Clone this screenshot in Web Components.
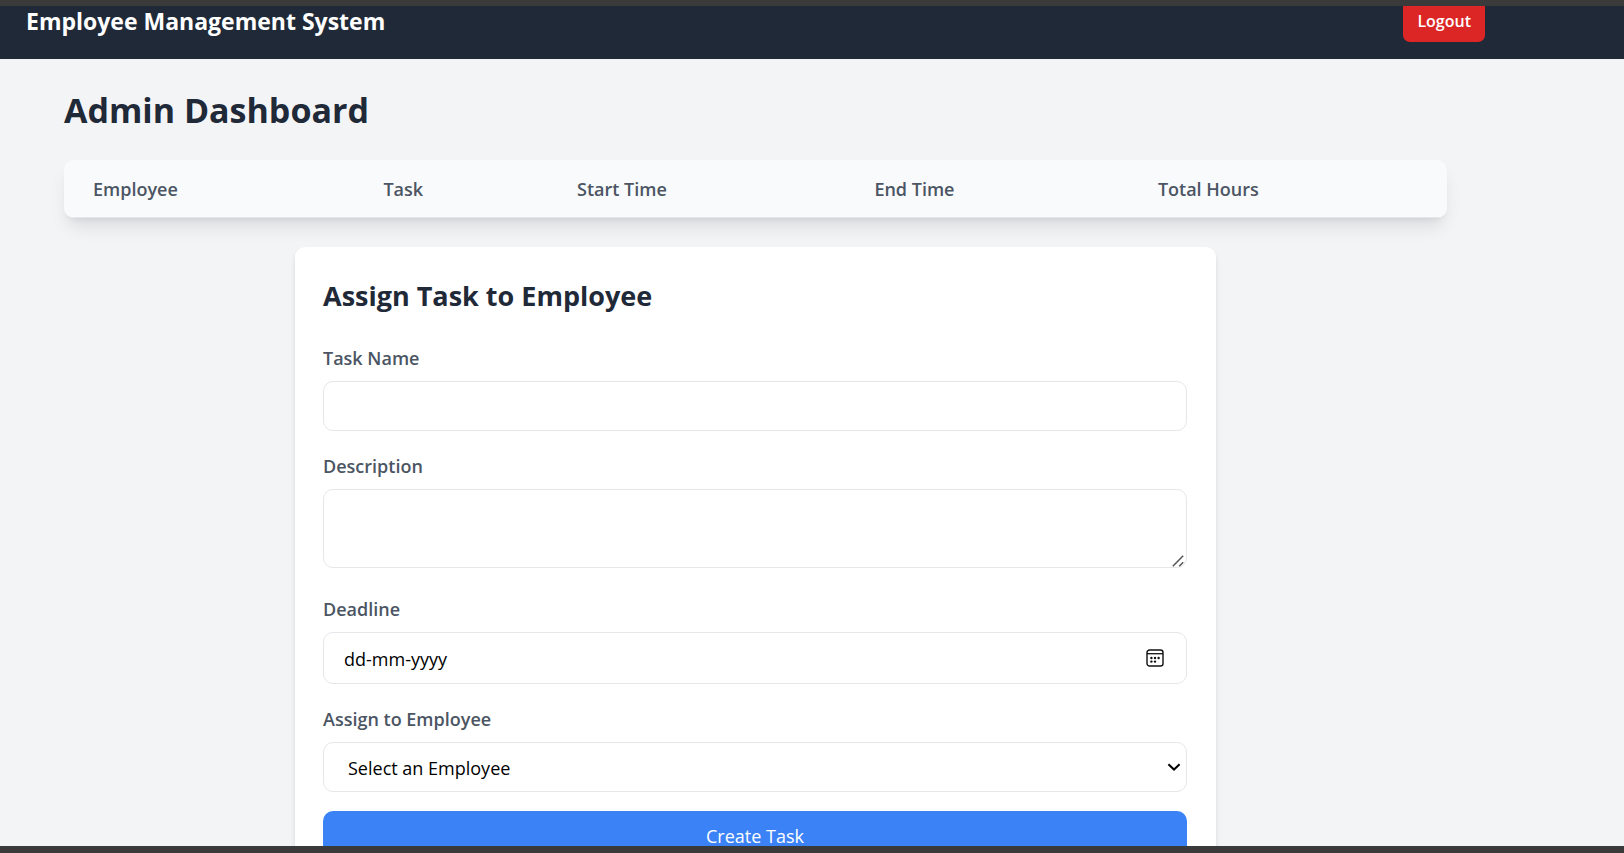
<!DOCTYPE html>
<html lang="en">
<head>
<meta charset="utf-8">
<meta name="viewport" content="width=device-width, initial-scale=1">
<title>Employee Management System</title>
<style>
  html { scrollbar-width: none; }
  body { margin: 0; background: #f3f4f6; font-family: "Open Sans", "Noto Sans", sans-serif; font-size: 18px; line-height: 28px; color: #1f2937; }
</style>
</head>
<body>
<app-shell>
  <app-header slot="header">Employee Management System</app-header>
  <page-title>Admin Dashboard</page-title>
  <time-table></time-table>
  <task-form></task-form>
</app-shell>

<script>
const define = (name, html, base = HTMLElement) => {
  const template = document.createElement('template');
  template.innerHTML = html;
  customElements.define(name, class extends base {
    constructor() {
      super();
      this.attachShadow({ mode: 'open' }).append(template.content.cloneNode(true));
    }
  });
};

/* Window frame with a scrolling page inside */
define('app-shell', `
  <style>
    :host { display: block; box-sizing: border-box; height: 100vh; overflow: auto; scrollbar-width: none; }
    .edge { position: fixed; left: 0; right: 0; background: #3a3a3a; z-index: 2; }
    .top { top: 0; height: 6px; }
    .bottom { bottom: 0; height: 7px; }
    main { padding: 29px 177px 28px 64px; }
  </style>
  <div class="edge top"></div>
  <slot name="header"></slot>
  <main><slot></slot></main>
  <div class="edge bottom"></div>`);

define('app-header', `
  <style>
    :host { display: flex; align-items: center; justify-content: space-between; padding: 0 139px 17px 26px; background: #1f2937; color: #fff; }
    h1 { margin: 0; font-size: 23px; line-height: 28px; font-weight: 700; }
    button { margin: 0; border: 0; border-radius: 7px; padding: 7px 14px; background: #dc2626; color: #fff; font: inherit; font-size: 16px; font-weight: 600; cursor: pointer; }
  </style>
  <h1><slot></slot></h1>
  <button type="button">Logout</button>`);

define('page-title', `
  <style>
    :host { display: block; margin-bottom: 27px; }
    h2 { margin: 0; font-size: 34px; line-height: 45px; font-weight: 700; }
  </style>
  <h2><slot></slot></h2>`);

define('time-table', `
  <style>
    :host { display: block; margin-bottom: 29px; border-radius: 10px; overflow: hidden; background: #f9fafb;
      box-shadow: 0 12px 18px -4px rgba(0,0,0,.1), 0 5px 7px -5px rgba(0,0,0,.1); }
    table { width: 100%; table-layout: fixed; border-collapse: collapse; }
    th { padding: 15px 0 14px 29px; border-bottom: 1px solid #e5e7eb; text-align: left; font-weight: 600; color: #4b5563; }
    .employee { width: 21%; } .task { width: 14%; } .start { width: 21.5%; } .end { width: 20.5%; }
  </style>
  <table>
    <colgroup><col class="employee"><col class="task"><col class="start"><col class="end"><col></colgroup>
    <thead><tr>
      <th scope="col">Employee</th>
      <th scope="col">Task</th>
      <th scope="col">Start Time</th>
      <th scope="col">End Time</th>
      <th scope="col">Total Hours</th>
    </tr></thead>
  </table>`);

define('task-form', `
  <style>
    :host { display: block; box-sizing: border-box; max-width: 921px; margin: 0 auto; padding: 29px 29px 29px 28px; border-radius: 10px; background: #fff;
      box-shadow: 0 5px 7px -1px rgba(0,0,0,.1), 0 2px 5px -2px rgba(0,0,0,.1); }
    h3 { margin: 0 0 28px; font-size: 27px; line-height: 40px; font-weight: 700; }
    .field { margin-bottom: 21px; }
    .field.tall { margin-bottom: 27px; }
    .field.last { margin-bottom: 19px; }
    label { display: block; margin-bottom: 9px; font-weight: 600; color: #4b5563; }
    .control { display: grid; align-items: center; }
    .control > * { grid-area: 1 / 1; }
    input, textarea, select { box-sizing: border-box; width: 100%; height: 50px; margin: 0; padding: 2px 20px 0; border: 1px solid #e5e7eb; border-radius: 10px; background: #fff; color: #000; font: inherit; outline: 0; }
    input { display: block; }
    textarea { display: block; height: 79px; padding: 10px 20px; resize: none; }
    .date { height: 52px; }
    .date::placeholder { color: #000; opacity: 1; }
    select { appearance: none; padding: 2px 24px 0; }
    svg { justify-self: end; pointer-events: none; }
    .calendar { margin-right: 23px; }
    .chevron { margin-right: 6px; }
    .grip { align-self: end; margin: 0 3px 1px; }
    .submit { display: block; width: 100%; margin: 0; padding: 11px; border: 0; border-radius: 10px; background: #3b82f6; color: #fff; font: inherit; cursor: pointer; }
  </style>
  <h3>Assign Task to Employee</h3>
  <form>
    <div class="field">
      <label for="name">Task Name</label>
      <input id="name" type="text">
    </div>
    <div class="field tall">
      <label for="description">Description</label>
      <div class="control">
        <textarea id="description"></textarea>
        <svg class="grip" width="12" height="12" viewBox="0 0 12 12" fill="none" stroke="#555" stroke-width="1.5" aria-hidden="true"><path d="M.8 11.2 11.2.8M7.2 11.2l4-4"/></svg>
      </div>
    </div>
    <div class="field">
      <label for="deadline">Deadline</label>
      <div class="control">
        <input class="date" id="deadline" type="text" placeholder="dd-mm-yyyy">
        <svg class="calendar" width="18" height="18" viewBox="0 0 18 18" aria-hidden="true">
          <rect x="1" y="1" width="16" height="16" rx="2.6" fill="none" stroke="#111" stroke-width="1.4"/>
          <path d="M1 4.7h16" stroke="#111" stroke-width="1.3"/>
          <g fill="#111"><circle cx="5.4" cy="9" r="1.2"/><circle cx="9" cy="9" r="1.2"/><circle cx="12.6" cy="9" r="1.2"/><circle cx="5.4" cy="12.6" r="1.2"/><circle cx="9" cy="12.6" r="1.2"/></g>
        </svg>
      </div>
    </div>
    <div class="field last">
      <label for="employee">Assign to Employee</label>
      <div class="control">
        <select id="employee"><option>Select an Employee</option></select>
        <svg class="chevron" width="14" height="8" viewBox="0 0 14 8" fill="none" stroke="#000" stroke-width="2" aria-hidden="true"><path d="M1.4 1.2 7 6.5l5.6-5.3"/></svg>
      </div>
    </div>
    <button class="submit" type="button">Create Task</button>
  </form>`);
</script>
</body>
</html>
